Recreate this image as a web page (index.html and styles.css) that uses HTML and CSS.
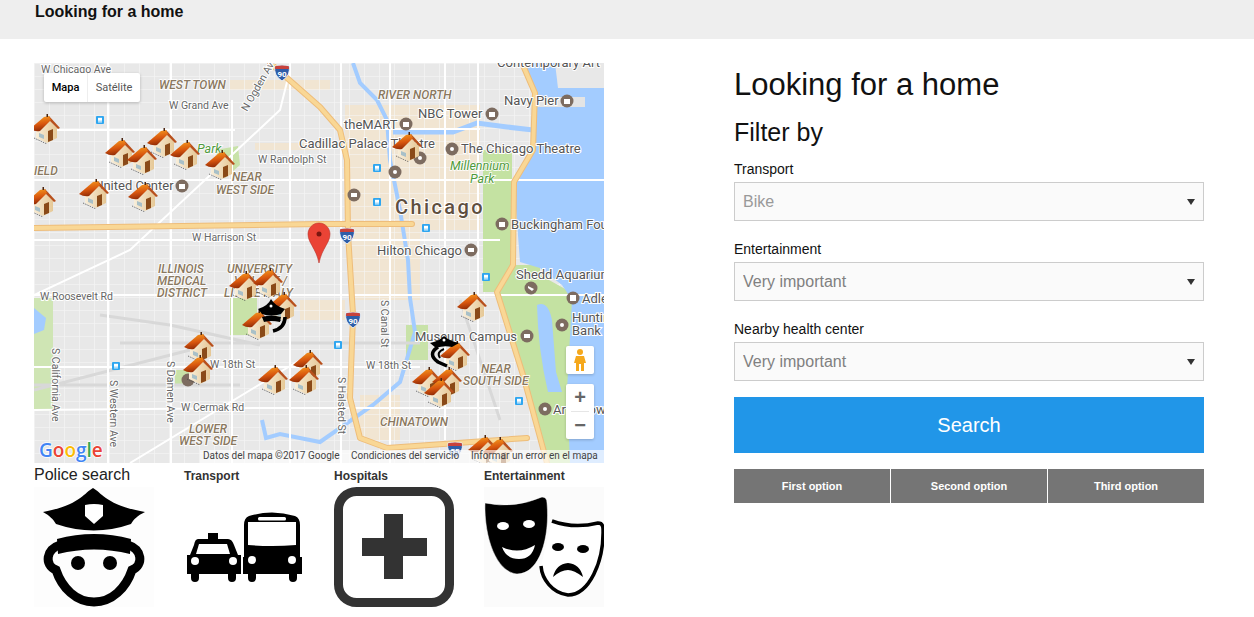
FILE: index.html
```html
<!DOCTYPE html>
<html lang="en">
<head>
  <meta charset="UTF-8" />
  <title>Looking for a home</title>
  <link rel="stylesheet" href="styles.css">
</head>
<body>
  <header class="topbar">
    <span class="brand">Looking for a home</span>
  </header>

  <main class="page">
    <section class="left">
      <div class="map">
        <svg class="map-svg" viewBox="34 63 570 400" width="570" height="400" xmlns="http://www.w3.org/2000/svg">
          <defs>
            <pattern id="blocks" x="34" y="63" width="15" height="13" patternUnits="userSpaceOnUse">
              <path d="M0 0H15M0 0V13" stroke="#f7f7f7" stroke-width="1.2" fill="none"/>
            </pattern>
            <linearGradient id="roof" x1=".35" y1="0" x2=".55" y2="1">
              <stop offset="0" stop-color="#f59a1e"/>
              <stop offset=".55" stop-color="#d8560e"/>
              <stop offset="1" stop-color="#8e2a06"/>
            </linearGradient>
            <linearGradient id="wall" x1="0" y1="0" x2="1" y2="0">
              <stop offset="0" stop-color="#f8eeda"/>
              <stop offset="1" stop-color="#e6c896"/>
            </linearGradient>
            <symbol id="house" viewBox="0 0 30 30">
              <path d="M6 15 L19 6 L27 14 V24 L17 29 L6 24Z" fill="url(#wall)"/>
              <path d="M19 2 L30 14 L28 15 L19 6Z" fill="#b8501c"/>
              <path d="M0 15 L14 3 L19 2 L21 6 L10 17 Q5 18 0 15Z" fill="url(#roof)"/>
              <rect x="16.500" y="0" width="1.500" height="3" fill="#4a2410"/>
              <path d="M18 17 L23 15 V26 L18 28Z" fill="#8a4a18"/>
              <path d="M9 19 L14 21 V25 L9 23Z" fill="#a8c0c8"/>
              <path d="M4 24 L17 30" stroke="#444" stroke-width=".8" stroke-dasharray="1 1"/>
            </symbol>
            <symbol id="transit" viewBox="0 0 8 8">
              <rect width="8" height="8" rx="1" fill="#2ea6f0"/>
              <rect x="2" y="1.800" width="4" height="3" fill="#fff"/>
              <rect x="2" y="5.400" width="4" height="1" fill="#fff"/>
            </symbol>
            <symbol id="shield" viewBox="0 0 16 16">
              <path d="M1 1 Q8 -.5 15 1 Q17 10 8 16 Q-1 10 1 1Z" fill="#2f5ea8" stroke="#fff" stroke-width=".8"/>
              <path d="M1.200 1.200 Q8 0 14.800 1.200 L15 4 H1Z" fill="#c8423c"/>
            </symbol>
          </defs>

          <rect x="34" y="63" width="570" height="400" fill="#e8e8e8"/>

          <!-- downtown blocks -->
          <path d="M345 105 H480 V230 H420 V300 H352 V230 H345Z" fill="#f3e4cc" opacity=".8"/>
          <path d="M230 80 H330 V90 H230Z M255 143 H330 V150 H255Z M360 395 H400 V440 H360Z M300 300 H345 V320 H300Z" fill="#f3e4cc" opacity=".8"/>
          <rect x="34" y="63" width="570" height="400" fill="url(#blocks)"/>

          <!-- parks -->
          <path d="M34 298 H53 V411 H34Z" fill="#cfe5b4"/>
          <path d="M230 298 H257 V335 H230Z M175 370 H190 V385 H175Z M406 325 H428 V360 H406Z" fill="#c8e2a8"/>
          <path d="M215 150 L238 146 L240 165 L225 178Z" fill="#c8e2a8"/>
          <path d="M483 150 H512 V262 L497 292 H483Z" fill="#c4e2a2"/>
          <path d="M497 292 L513 265 H540 V275 L585 300 L600 463 L547 463 L523 375Z" fill="#c4e2a2"/>
          <path d="M525 63 L558 63 L552 98 L537 98Z" fill="#c4e2a2"/>

          <!-- water -->
          <path d="M522 63 L535 93 L533 150 L514 182 L520 262 L540 268 L562 285 L572 300 L567 390 L570 463 L604 463 V63Z" fill="#a3ccff"/>
          <path d="M555 63 H604 V88 H558Z" fill="#e8e8e8"/>
          <path d="M533 97 H585 V107 H533Z" fill="#e4e4e4"/>
          <path d="M537 305 Q548 300 552 320 L556 372 L562 392 L548 392 Q538 350 537 305Z" fill="#a3ccff"/>
          <path d="M34 308 L46 318 L44 330 L34 334Z" fill="#a3ccff"/>
          <path d="M353 63 L360 83 L377 100 L387 120 L390 160 L400 210 L408 260 L410 298 L415 332 L400 382 L373 405 L320 442 L280 434 L266 438 L262 420" fill="none" stroke="#a3ccff" stroke-width="4"/>
          <path d="M393 132 H453 L477 123 L507 127 L533 130" fill="none" stroke="#a3ccff" stroke-width="5"/>

          <!-- rail -->
          <path d="M34 390 L190 350 M120 343 H420 M100 315 L170 325 L260 345 M34 385 H240 M460 300 L500 420" fill="none" stroke="#d8d8d8" stroke-width="3"/>

          <!-- streets -->
          <path d="M34 180 H604 M34 295 H604 M34 367 H420 M34 410 L260 408 H500 M34 130 H235 M350 129 H480 M108 63 V463 M171 63 V463 M232 100 V463 M290 63 V463 M341 63 V463 M390 63 V463 M478 63 V463 M445 63 V440 M34 295 L130 250 L280 110 L290 70 M130 463 L300 360 M34 240 H500" fill="none" stroke="#fff" stroke-width="2"/>

          <!-- freeways -->
          <g fill="none" stroke-linejoin="round" stroke-linecap="round">
            <path d="M34 228 L320 224 H412 M270 63 L320 107 L340 130 L347 160 L348 233 L353 315 L350 398 L360 438 L387 448 L527 438 M513 265 L497 292 L523 375 L547 463 M522 63 L535 93 L533 150 L514 182 L513 265" stroke="#eebd7a" stroke-width="6"/>
            <path d="M34 228 L320 224 H412 M270 63 L320 107 L340 130 L347 160 L348 233 L353 315 L350 398 L360 438 L387 448 L527 438 M513 265 L497 292 L523 375 L547 463 M522 63 L535 93 L533 150 L514 182 L513 265" stroke="#f9d795" stroke-width="4"/>
          </g>

          <!-- shields and transit stops -->
          <use href="#shield" x="274" y="65" width="16" height="16"/>
          <use href="#shield" x="339" y="228" width="16" height="16"/>
          <use href="#shield" x="345" y="312" width="16" height="16"/>
          <use href="#shield" x="447" y="442" width="16" height="16"/>
          <text class="shield-num" x="282" y="77">90</text>
          <text class="shield-num" x="347" y="240">90</text>
          <text class="shield-num" x="353" y="324">90</text>
          <text class="shield-num" x="455" y="454">55</text>
          <use href="#transit" x="96" y="116" width="8" height="8"/>
          <use href="#transit" x="373" y="164" width="8" height="8"/>
          <use href="#transit" x="373" y="198" width="8" height="8"/>
          <use href="#transit" x="422" y="224" width="8" height="8"/>
          <use href="#transit" x="482" y="273" width="8" height="8"/>
          <use href="#transit" x="334" y="341" width="8" height="8"/>
          <use href="#transit" x="515" y="397" width="8" height="8"/>
          <use href="#transit" x="112" y="362" width="8" height="8"/>

          <!-- poi -->
          <g fill="#7d6c60">
            <circle cx="182" cy="186" r="6.500"/><circle cx="406" cy="124" r="6.500"/><circle cx="492" cy="114" r="6.500"/>
            <circle cx="567" cy="101" r="6.500"/><circle cx="420" cy="158" r="6.500"/><circle cx="395" cy="172" r="6.500"/>
            <circle cx="452" cy="149" r="6.500"/><circle cx="354" cy="195" r="6.500"/><circle cx="502" cy="224" r="6.500"/>
            <circle cx="471" cy="250" r="6.500"/><circle cx="531" cy="288" r="6.500"/><circle cx="573" cy="298" r="6.500"/>
            <circle cx="562" cy="325" r="6.500"/><circle cx="527" cy="336" r="6.500"/><circle cx="545" cy="409" r="6.500"/>
            <circle cx="188" cy="380" r="6.500"/>
          </g>
          <g fill="#fff">
            <rect x="179" y="184" width="6" height="5"/><rect x="403" y="122" width="6" height="5"/><rect x="489" y="112" width="6" height="5"/>
            <rect x="564" y="99" width="6" height="5"/><circle cx="420" cy="158" r="2"/><circle cx="395" cy="172" r="2"/>
            <circle cx="452" cy="149" r="2"/><rect x="351" y="193" width="6" height="4"/><rect x="499" y="222" width="6" height="5"/>
            <rect x="468" y="248" width="6" height="4"/><path d="M528 286l6 3-2 2-4-3z"/><rect x="570" y="295" width="6" height="6"/>
            <circle cx="562" cy="325" r="2"/><rect x="524" y="334" width="6" height="4"/><circle cx="545" cy="409" r="2"/>
          </g>

          <!-- street labels -->
          <g class="street">
            <text x="41" y="73">W Chicago Ave</text>
            <text x="169" y="109">W Grand Ave</text>
            <text x="258" y="163">W Randolph St</text>
            <text x="192" y="241">W Harrison St</text>
            <text x="40" y="300">W Roosevelt Rd</text>
            <text x="210" y="368">W 18th St</text>
            <text x="181" y="411">W Cermak Rd</text>
            <text x="366" y="369">W 18th St</text>
            <text transform="translate(247 112) rotate(-60)">N Ogden Ave</text>
            <text transform="translate(52 348) rotate(90)">S California Ave</text>
            <text transform="translate(110 380) rotate(90)">S Western Ave</text>
            <text transform="translate(167 361) rotate(90)">S Damen Ave</text>
            <text transform="translate(381 300) rotate(90)">S Canal St</text>
            <text transform="translate(338 377) rotate(90)">S Halsted St</text>
          </g>
          <g class="area">
            <text x="159" y="89">WEST TOWN</text>
            <text x="378" y="99">RIVER NORTH</text>
            <text x="34" y="175">IELD</text>
            <text x="232" y="181">NEAR</text>
            <text x="216" y="194">WEST SIDE</text>
            <text x="158" y="273">ILLINOIS</text>
            <text x="157" y="285">MEDICAL</text>
            <text x="157" y="297">DISTRICT</text>
            <text x="227" y="273">UNIVERSITY</text>
            <text x="234" y="285">VILLAGE /</text>
            <text x="224" y="297">LITTLE ITALY</text>
            <text x="189" y="433">LOWER</text>
            <text x="179" y="445">WEST SIDE</text>
            <text x="481" y="373">NEAR</text>
            <text x="463" y="385">SOUTH SIDE</text>
            <text x="380" y="426">CHINATOWN</text>
          </g>
          <g class="place">
            <text x="95" y="190">United Center</text>
            <text x="497" y="67">Contemporary Art</text>
            <text x="504" y="105">Navy Pier</text>
            <text x="418" y="118">NBC Tower</text>
            <text x="344" y="129">theMART</text>
            <text x="299" y="148">Cadillac Palace Theatre</text>
            <text x="461" y="153">The Chicago Theatre</text>
            <text x="511" y="229">Buckingham Fountain</text>
            <text x="377" y="255">Hilton Chicago</text>
            <text x="516" y="279">Shedd Aquarium</text>
            <text x="582" y="303">Adler</text>
            <text x="572" y="322">Huntington</text>
            <text x="572" y="335">Bank</text>
            <text x="415" y="341">Museum Campus</text>
            <text x="553" y="414">Art Show</text>
          </g>
          <g class="green-label">
            <text x="197" y="153">Park</text>
            <text x="450" y="170">Millennium</text>
            <text x="470" y="183">Park</text>
          </g>
          <text class="city" x="395" y="214">Chicago</text>

          <!-- houses -->
          <g>
            <use href="#house" x="30" y="114" width="30" height="30"/>
            <use href="#house" x="105" y="138" width="30" height="30"/>
            <use href="#house" x="127" y="145" width="30" height="30"/>
            <use href="#house" x="147" y="128" width="30" height="30"/>
            <use href="#house" x="170" y="140" width="30" height="30"/>
            <use href="#house" x="205" y="150" width="30" height="30"/>
            <use href="#house" x="79" y="179" width="30" height="30"/>
            <use href="#house" x="128" y="182" width="30" height="30"/>
            <use href="#house" x="26" y="187" width="30" height="30"/>
            <use href="#house" x="392" y="132" width="30" height="30"/>
            <use href="#house" x="229" y="271" width="30" height="30"/>
            <use href="#house" x="253" y="268" width="30" height="30"/>
            <use href="#house" x="267" y="292" width="30" height="30"/>
            <use href="#house" x="242" y="310" width="30" height="30"/>
            <use href="#house" x="184" y="332" width="30" height="30"/>
            <use href="#house" x="183" y="355" width="30" height="30"/>
            <use href="#house" x="258" y="365" width="30" height="30"/>
            <use href="#house" x="293" y="350" width="30" height="30"/>
            <use href="#house" x="289" y="365" width="30" height="30"/>
            <use href="#house" x="457" y="292" width="30" height="30"/>
            <use href="#house" x="440" y="341" width="30" height="30"/>
            <use href="#house" x="412" y="367" width="30" height="30"/>
            <use href="#house" x="432" y="367" width="30" height="30"/>
            <use href="#house" x="424" y="378" width="30" height="30"/>
            <use href="#house" x="468" y="435" width="30" height="30"/>
            <use href="#house" x="483" y="437" width="30" height="30"/>
          </g>

          <!-- police markers -->
          <g fill="#000">
            <path d="M258 309 Q268 306 271 299 Q275 306 285 309 L281 314 Q271 317 262 314Z"/>
            <path d="M262 317 Q271 314 281 317 L280 322 Q271 320 264 322Z"/>
            <path d="M285 317 Q285 328 273 331" fill="none" stroke="#000" stroke-width="3.500"/>
            <path d="M430 343 Q440 341 444 336 Q449 341 459 343 L452 347 Q444 345 436 348Z"/>
            <path d="M438 347 Q427 354 438 362 L447 366" fill="none" stroke="#000" stroke-width="3.500"/>
            <path d="M444 349 Q436 352 440 358" fill="none" stroke="#000" stroke-width="2"/>
          </g>
          <circle cx="271" cy="306" r="1.500" fill="#fff"/>
          <circle cx="444" cy="340" r="1.500" fill="#fff"/>

          <!-- pin -->
          <path d="M319 223 C312 223 308 229 308 234 C308 243 316 248 319 263 C322 248 330 243 330 234 C330 229 326 223 319 223Z" fill="#ea4335" stroke="#b8332a" stroke-width=".6"/>
          <circle cx="319" cy="234" r="2.500" fill="#7a1710"/>

          <!-- copyright -->
          <rect x="200" y="450" width="404" height="13" fill="#fff" opacity=".65"/>
          <text class="legal" x="203" y="459">Datos del mapa ©2017 Google</text>
          <text class="legal" x="351" y="459">Condiciones del servicio</text>
          <text class="legal" x="471" y="459">Informar un error en el mapa</text>
          <text class="logo" x="39" y="457"><tspan fill="#4285f4">G</tspan><tspan fill="#ea4335">o</tspan><tspan fill="#fbbc05">o</tspan><tspan fill="#4285f4">g</tspan><tspan fill="#34a853">l</tspan><tspan fill="#ea4335">e</tspan></text>
        </svg>

        <div class="map-type">
          <span class="map-type-on">Mapa</span>
          <span class="map-type-off">Satélite</span>
        </div>
        <div class="pegman">
          <svg width="12" height="22" viewBox="0 0 12 22"><circle cx="6" cy="3" r="3" fill="#f5a81c"/><path d="M2 7 H10 L12 14 H10 V22 H7 V15 H5 V22 H2 V14 H0Z" fill="#f5a81c"/></svg>
        </div>
        <div class="zoom">
          <span class="zoom-btn">+</span>
          <span class="zoom-sep"></span>
          <span class="zoom-btn">−</span>
        </div>
      </div>

      <div class="icons">
        <div class="icon-item">
          <div class="icon-title big">Police search</div>
          <svg class="icon" viewBox="0 0 120 120">
            <rect width="120" height="120" fill="#fdfdfd"/>
            <path d="M59 1 C68 6 72 18 111 25 C103 29 100 32 97 37 Q60 50 22 37 C19 32 16 29 9 25 C46 18 50 6 59 1Z"/>
            <path d="M51 18 Q60 16 69 18 V29 L60 37 L51 29Z" fill="#fff"/>
            <path d="M23 52 Q60 42 97 52 L96 67 Q60 58 24 67Z"/>
            <path d="M26 58 C12 62 10 78 22 83 C28 101 42 115 60 115 C78 115 92 101 98 83 C110 78 108 62 94 58" fill="none" stroke="#000" stroke-width="9"/>
            <circle cx="44" cy="76" r="7"/>
            <circle cx="76" cy="76" r="7"/>
          </svg>
        </div>
        <div class="icon-item">
          <div class="icon-title">Transport</div>
          <svg class="icon" viewBox="0 0 120 120">
            <path d="M24 46 H34 V52 H24Z"/>
            <path d="M14 52 H44 Q48 52 50 58 L54 68 H57 V87 H52 V91 Q52 95 48 95 Q44 95 44 91 V87 H15 V91 Q15 95 11 95 Q7 95 7 91 V87 H3 V68 H6 L10 58 Q11 52 14 52Z"/>
            <path d="M15 57 H43 L46 67 H12Z" fill="#fff"/>
            <circle cx="11" cy="74" r="4" fill="#fff"/>
            <circle cx="49" cy="74" r="4" fill="#fff"/>
            <path d="M65 29 Q88 22 111 29 Q116 31 116 38 V70 H118 V87 H113 V91 Q113 95 109 95 Q105 95 105 91 V87 H72 V91 Q72 95 68 95 Q64 95 64 91 V87 H59 V70 H60 V38 Q60 31 65 29Z"/>
            <path d="M64 35 H112 V58 Q88 60 64 58Z" fill="#fff"/>
            <rect x="74" y="30" width="28" height="3.500" rx="1.500" fill="#fff"/>
            <circle cx="68" cy="73" r="4" fill="#fff"/>
            <circle cx="108" cy="73" r="4" fill="#fff"/>
          </svg>
        </div>
        <div class="icon-item">
          <div class="icon-title">Hospitals</div>
          <svg class="icon" viewBox="0 0 120 120">
            <rect x="4.500" y="4.500" width="111" height="111" rx="18" fill="#fff" stroke="#333" stroke-width="9"/>
            <path d="M50 27 H69 V51 H93 V69 H69 V92 H50 V69 H28 V51 H50Z" fill="#333"/>
          </svg>
        </div>
        <div class="icon-item">
          <div class="icon-title">Entertainment</div>
          <svg class="icon" viewBox="0 0 120 120">
            <rect width="120" height="120" fill="#fbfbfb"/>
            <path d="M68 34 Q90 42 114 36 Q119 36 119 42 C120 75 105 108 84 108 C68 106 58 92 57 79" fill="#fff" stroke="#000" stroke-width="3.500"/>
            <ellipse cx="74" cy="60" rx="6" ry="4"/>
            <ellipse cx="99" cy="62" rx="6" ry="4"/>
            <path d="M69 90 Q72 77 84 76 Q96 77 99 90 Q90 83 84 83 Q77 83 69 90Z"/>
            <path d="M1 16 Q30 22 58 10 Q63 10 63 16 C66 50 56 87 33 87 C12 85 0 50 1 16Z" stroke="#fbfbfb" stroke-width=".5"/>
            <ellipse cx="19" cy="39" rx="6" ry="4" fill="#fff"/>
            <ellipse cx="45" cy="37" rx="6" ry="4" fill="#fff"/>
            <path d="M18 60 Q35 68 51 58 Q48 72 35 72 Q22 72 18 60Z" fill="#fff"/>
          </svg>
        </div>
      </div>
    </section>

    <section class="right">
      <h1>Looking for a home</h1>
      <h2>Filter by</h2>

      <label class="field-label" for="transport">Transport</label>
      <div class="select-wrap">
        <select id="transport" class="select light"><option>Bike</option></select>
      </div>

      <label class="field-label" for="entertainment">Entertainment</label>
      <div class="select-wrap">
        <select id="entertainment" class="select"><option>Very important</option></select>
      </div>

      <label class="field-label" for="health">Nearby health center</label>
      <div class="select-wrap">
        <select id="health" class="select"><option>Very important</option></select>
      </div>

      <button class="search-btn">Search</button>

      <div class="options">
        <button class="option">First option</button>
        <button class="option">Second option</button>
        <button class="option">Third option</button>
      </div>
    </section>
  </main>
</body>
</html>
```

FILE: styles.css
```css
* {
  box-sizing: border-box;
}
body {
  margin: 0;
  font-family: "Liberation Sans", Arial, sans-serif;
  background: #fff;
  color: #111;
}
.topbar {
  height: 39px;
  background: #eee;
  padding: 3px 0 0 35px;
}
.brand {
  font-size: 16px;
  font-weight: bold;
  line-height: 18px;
  display: block;
}
.page {
  display: flex;
  padding: 24px 0 0 34px;
}
.left {
  width: 570px;
  flex: none;
}
.right {
  width: 470px;
  margin-left: 130px;
  flex: none;
}

/* map */
.map {
  position: relative;
  width: 570px;
  height: 400px;
  overflow: hidden;
}
.map-svg {
  display: block;
  font-family: Roboto, "Liberation Sans", sans-serif;
}
.street text {
  font-size: 10.5px;
  fill: #666;
  paint-order: stroke;
  stroke: #fff;
  stroke-width: 2px;
}
.area text {
  font-size: 12px;
  font-weight: 500;
  font-style: italic;
  fill: #8a7860;
  paint-order: stroke;
  stroke: #fff;
  stroke-width: 1.5px;
}
.place text {
  font-size: 13px;
  fill: #555;
  paint-order: stroke;
  stroke: #fff;
  stroke-width: 2px;
}
.green-label text {
  font-size: 12.5px;
  font-style: italic;
  fill: #4f9a3a;
  paint-order: stroke;
  stroke: #fff;
  stroke-width: 1.5px;
}
.city {
  font-size: 20px;
  font-weight: 500;
  letter-spacing: 2.400px;
  fill: #5f4f3f;
  paint-order: stroke;
  stroke: #fff;
  stroke-width: 2px;
}
.shield-num {
  font-size: 8px;
  font-weight: 700;
  fill: #fff;
  text-anchor: middle;
}
.legal {
  font-size: 10px;
  fill: #444;
}
.logo {
  font-family: "Open Sans", sans-serif;
  font-size: 19px;
  font-weight: 600;
  paint-order: stroke;
  stroke: #fff;
  stroke-width: 1.5px;
}
.map-type {
  position: absolute;
  top: 10px;
  left: 10px;
  display: flex;
  height: 29px;
  background: #fff;
  border-radius: 2px;
  box-shadow: 0 1px 3px rgba(0,0,0,0.25);
  font-family: Roboto, sans-serif;
  font-size: 11px;
  line-height: 29px;
}
.map-type-on {
  width: 44px;
  text-align: center;
  color: #000;
  font-weight: 500;
  border-right: 1px solid #eee;
}
.map-type-off {
  width: 52px;
  text-align: center;
  color: #565656;
}
.pegman {
  position: absolute;
  left: 532px;
  top: 283px;
  width: 28px;
  height: 28px;
  background: #fff;
  border-radius: 2px;
  display: flex;
  align-items: center;
  justify-content: center;
  box-shadow: 0 1px 3px rgba(0,0,0,0.2);
}
.zoom {
  position: absolute;
  left: 532px;
  top: 321px;
  width: 28px;
  height: 55px;
  background: #fff;
  border-radius: 2px;
  display: flex;
  flex-direction: column;
  box-shadow: 0 1px 3px rgba(0,0,0,0.2);
}
.zoom-btn {
  flex: 1;
  display: flex;
  align-items: center;
  justify-content: center;
  font-size: 20px;
  font-weight: bold;
  color: #666;
}
.zoom-sep {
  height: 1px;
  margin: 0 5px;
  background: #e6e6e6;
}

/* icon row */
.icons {
  display: flex;
  gap: 30px;
}
.icon-item {
  width: 120px;
  flex: none;
}
.icon-title {
  height: 24px;
  font-size: 12px;
  font-weight: bold;
  line-height: 26px;
  color: #333;
}
.icon-title.big {
  font-size: 16px;
  font-weight: normal;
  line-height: 24px;
  color: #222;
}
.icon {
  display: block;
  width: 120px;
  height: 120px;
}

/* filter form */
h1 {
  font-size: 31px;
  font-weight: normal;
  line-height: 34px;
  margin: 5px 0 0;
}
h2 {
  font-size: 25px;
  font-weight: normal;
  line-height: 28px;
  margin: 16px 0 0;
}
.field-label {
  display: block;
  font-size: 14px;
  line-height: 16px;
  margin: 20px 0 5px;
}
h2 + .field-label {
  margin-top: 15px;
}
.select-wrap {
  position: relative;
}
.select-wrap::after {
  content: "";
  position: absolute;
  right: 9px;
  top: 17px;
  border-left: 4px solid transparent;
  border-right: 4px solid transparent;
  border-top: 6px solid #333;
}
.select {
  display: block;
  width: 100%;
  height: 39px;
  padding: 0 8px;
  font-family: inherit;
  font-size: 16px;
  color: #808080;
  background: #fafafa;
  border: 1px solid #ccc;
  border-radius: 0;
  appearance: none;
}
.select.light {
  color: #999;
}
.search-btn {
  display: block;
  width: 100%;
  height: 56px;
  margin-top: 16px;
  border: none;
  background: #2196e8;
  color: #fff;
  font-family: inherit;
  font-size: 20px;
}
.options {
  display: flex;
  margin-top: 16px;
}
.option {
  flex: 1;
  height: 34px;
  border: none;
  border-right: 1px solid #fff;
  background: #757575;
  color: #fff;
  font-family: inherit;
  font-size: 11px;
  font-weight: bold;
}
.option:last-child {
  border-right: none;
}
```
